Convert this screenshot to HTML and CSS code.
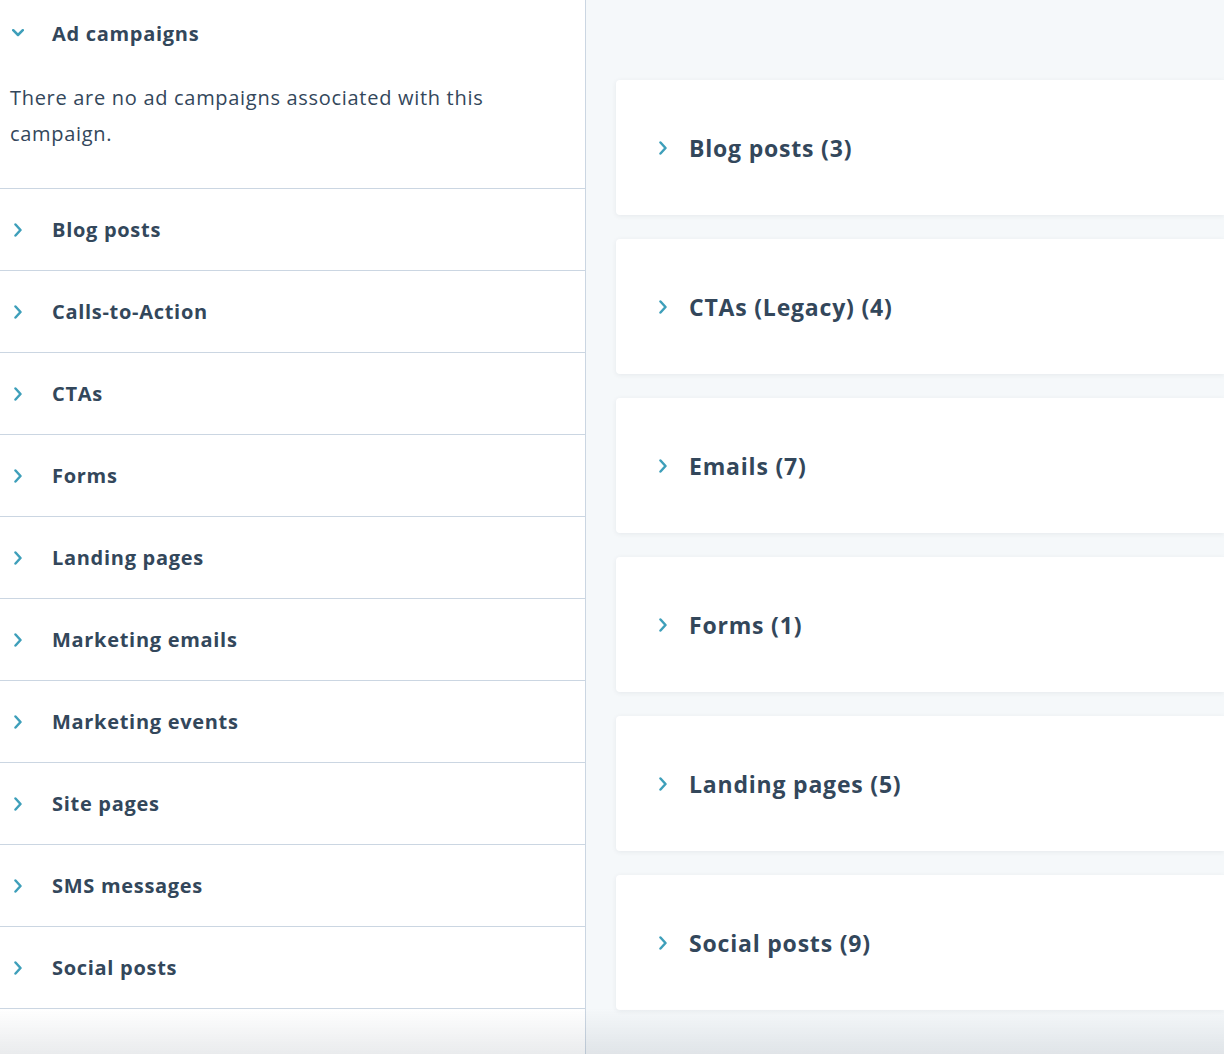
FILE: index.html
```html
<!DOCTYPE html>
<html lang="en">
<head>
    <meta charset="UTF-8">
    <title>Campaign assets</title>
    <link rel="stylesheet" href="styles.css">
</head>
<body>
    <div class="sidebar">
        <div class="section">
            <div class="section-header">
                <svg class="chevron-down" viewBox="0 0 12 8"><polyline points="1.2,1.2 6,6 10.8,1.2"/></svg>
                <span class="row-title">Ad campaigns</span>
            </div>
            <p class="empty-text">There are no ad campaigns associated with this campaign.</p>
        </div>
        <div class="row"><svg class="chevron" viewBox="0 0 8 14"><polyline points="1.5,1.5 6.5,7 1.5,12.5"/></svg><span class="row-title">Blog posts</span></div>
        <div class="row"><svg class="chevron" viewBox="0 0 8 14"><polyline points="1.5,1.5 6.5,7 1.5,12.5"/></svg><span class="row-title">Calls-to-Action</span></div>
        <div class="row"><svg class="chevron" viewBox="0 0 8 14"><polyline points="1.5,1.5 6.5,7 1.5,12.5"/></svg><span class="row-title">CTAs</span></div>
        <div class="row"><svg class="chevron" viewBox="0 0 8 14"><polyline points="1.5,1.5 6.5,7 1.5,12.5"/></svg><span class="row-title">Forms</span></div>
        <div class="row"><svg class="chevron" viewBox="0 0 8 14"><polyline points="1.5,1.5 6.5,7 1.5,12.5"/></svg><span class="row-title">Landing pages</span></div>
        <div class="row"><svg class="chevron" viewBox="0 0 8 14"><polyline points="1.5,1.5 6.5,7 1.5,12.5"/></svg><span class="row-title">Marketing emails</span></div>
        <div class="row"><svg class="chevron" viewBox="0 0 8 14"><polyline points="1.5,1.5 6.5,7 1.5,12.5"/></svg><span class="row-title">Marketing events</span></div>
        <div class="row"><svg class="chevron" viewBox="0 0 8 14"><polyline points="1.5,1.5 6.5,7 1.5,12.5"/></svg><span class="row-title">Site pages</span></div>
        <div class="row"><svg class="chevron" viewBox="0 0 8 14"><polyline points="1.5,1.5 6.5,7 1.5,12.5"/></svg><span class="row-title">SMS messages</span></div>
        <div class="row"><svg class="chevron" viewBox="0 0 8 14"><polyline points="1.5,1.5 6.5,7 1.5,12.5"/></svg><span class="row-title">Social posts</span></div>
    </div>

    <div class="main">
        <div class="card"><svg class="chevron" viewBox="0 0 8 14"><polyline points="1.5,1.5 6.5,7 1.5,12.5"/></svg><span class="card-title">Blog posts (3)</span></div>
        <div class="card"><svg class="chevron" viewBox="0 0 8 14"><polyline points="1.5,1.5 6.5,7 1.5,12.5"/></svg><span class="card-title">CTAs (Legacy) (4)</span></div>
        <div class="card"><svg class="chevron" viewBox="0 0 8 14"><polyline points="1.5,1.5 6.5,7 1.5,12.5"/></svg><span class="card-title">Emails (7)</span></div>
        <div class="card"><svg class="chevron" viewBox="0 0 8 14"><polyline points="1.5,1.5 6.5,7 1.5,12.5"/></svg><span class="card-title">Forms (1)</span></div>
        <div class="card"><svg class="chevron" viewBox="0 0 8 14"><polyline points="1.5,1.5 6.5,7 1.5,12.5"/></svg><span class="card-title">Landing pages (5)</span></div>
        <div class="card"><svg class="chevron" viewBox="0 0 8 14"><polyline points="1.5,1.5 6.5,7 1.5,12.5"/></svg><span class="card-title">Social posts (9)</span></div>
    </div>

    <div class="bottom-fade"></div>
</body>
</html>
```

FILE: styles.css
```css
body {
    margin: 0;
    display: flex;
    height: 100vh;
    overflow: hidden;
    font-family: 'Open Sans', sans-serif;
    color: #33475b;
    background-color: #f5f8fa;
}

.sidebar {
    width: 585px;
    flex-shrink: 0;
    background-color: #fff;
    border-right: 1px solid #cbd6e2;
}

.section-header {
    display: flex;
    align-items: center;
    height: 66px;
}

.chevron-down {
    width: 12px;
    height: 8px;
    margin-left: 12px;
    margin-right: 28px;
}

.chevron {
    width: 8px;
    height: 14px;
    flex-shrink: 0;
}

.chevron polyline, .chevron-down polyline {
    fill: none;
    stroke: #3e9fba;
    stroke-width: 2.5;
    stroke-linecap: round;
    stroke-linejoin: round;
}

.row-title {
    font-size: 20px;
    font-weight: 700;
    letter-spacing: 0.7px;
}

.empty-text {
    margin: 14px 0 0;
    padding: 0 10px 36px;
    font-size: 20px;
    line-height: 36px;
    letter-spacing: 0.7px;
    width: 500px;
}

.row {
    display: flex;
    align-items: center;
    height: 81px;
    border-top: 1px solid #cbd6e2;
}

.row:last-child {
    border-bottom: 1px solid #cbd6e2;
}

.row .chevron {
    margin-left: 14px;
    margin-right: 30px;
}

.main {
    flex: 1;
    padding: 80px 0 0 30px;
    overflow: hidden;
}

.card {
    display: flex;
    align-items: center;
    height: 135px;
    margin-bottom: 24px;
    background-color: #fff;
    border-radius: 4px 0 0 4px;
    box-shadow: 0 1px 5px rgba(45, 62, 80, 0.08);
}

.card .chevron {
    margin-left: 43px;
    margin-right: 22px;
}

.card-title {
    font-size: 23px;
    font-weight: 700;
    letter-spacing: 0.8px;
}

.bottom-fade {
    position: fixed;
    left: 0;
    right: 0;
    bottom: 0;
    height: 46px;
    background: linear-gradient(to bottom, rgba(45, 62, 80, 0), rgba(45, 62, 80, 0.1));
    pointer-events: none;
}
```
